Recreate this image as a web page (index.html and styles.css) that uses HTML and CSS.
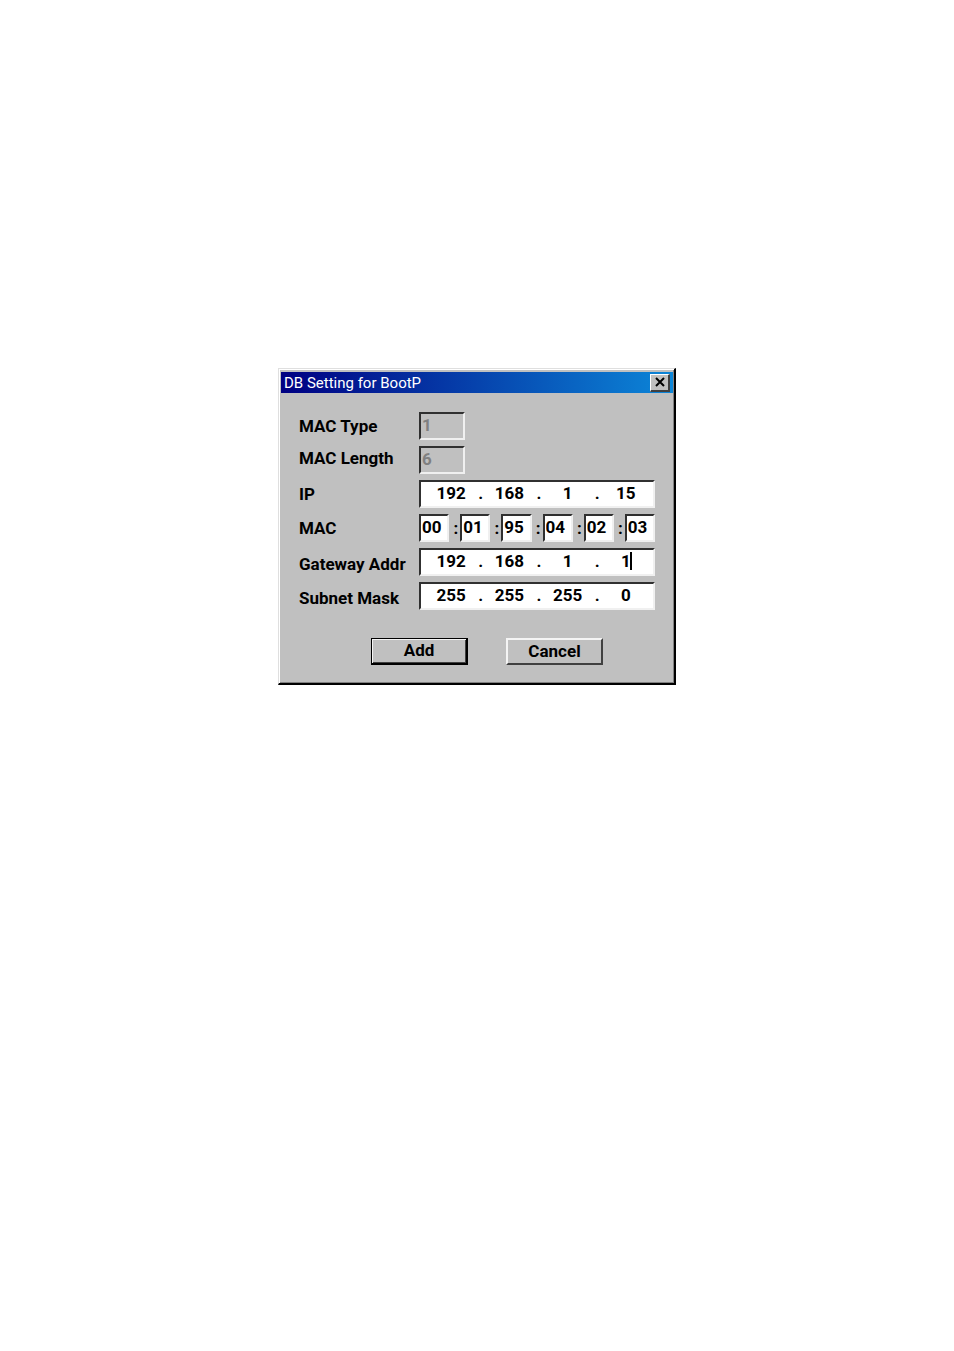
FILE: index.html
```html
<!DOCTYPE html>
<html lang="en">
<head>
    <meta charset="UTF-8">
    <meta name="viewport" content="width=device-width, initial-scale=1.0">
    <title>DB Setting for BootP</title>
    <link rel="stylesheet" href="styles.css">
</head>
<body>
    <form class="dialog">
        <div class="title-bar">
            <h1>DB Setting for BootP</h1>
            <button type="button" class="close-btn" aria-label="Close">
                <svg width="10" height="10" viewBox="0 0 10 10"><path d="M1 1L9 9M9 1L1 9" stroke="#000" stroke-width="2"/></svg>
            </button>
        </div>

        <div class="fields">
            <div class="row">
                <label for="mac-type">MAC Type</label>
                <input class="box short" type="text" id="mac-type" value="1" disabled>
            </div>
            <div class="row high">
                <label for="mac-length">MAC Length</label>
                <input class="box short" type="text" id="mac-length" value="6" disabled>
            </div>
            <div class="row">
                <label for="ip-1">IP</label>
                <div class="box address">
                    <input type="text" id="ip-1" value="192"><span>.</span>
                    <input type="text" aria-label="IP 2" value="168"><span>.</span>
                    <input type="text" aria-label="IP 3" value="1"><span>.</span>
                    <input type="text" aria-label="IP 4" value="15">
                </div>
            </div>
            <div class="row">
                <label for="mac-1">MAC</label>
                <div class="mac">
                    <input class="box" type="text" id="mac-1" value="00"><span>:</span>
                    <input class="box" type="text" aria-label="MAC 2" value="01"><span>:</span>
                    <input class="box" type="text" aria-label="MAC 3" value="95"><span>:</span>
                    <input class="box" type="text" aria-label="MAC 4" value="04"><span>:</span>
                    <input class="box" type="text" aria-label="MAC 5" value="02"><span>:</span>
                    <input class="box" type="text" aria-label="MAC 6" value="03">
                </div>
            </div>
            <div class="row low">
                <label for="gateway-1">Gateway Addr</label>
                <div class="box address active">
                    <input type="text" id="gateway-1" value="192"><span>.</span>
                    <input type="text" aria-label="Gateway 2" value="168"><span>.</span>
                    <input type="text" aria-label="Gateway 3" value="1"><span>.</span>
                    <input type="text" aria-label="Gateway 4" value="1">
                </div>
            </div>
            <div class="row low">
                <label for="subnet-1">Subnet Mask</label>
                <div class="box address">
                    <input type="text" id="subnet-1" value="255"><span>.</span>
                    <input type="text" aria-label="Subnet 2" value="255"><span>.</span>
                    <input type="text" aria-label="Subnet 3" value="255"><span>.</span>
                    <input type="text" aria-label="Subnet 4" value="0">
                </div>
            </div>
        </div>

        <div class="buttons">
            <button type="button" class="btn default">Add</button>
            <button type="button" class="btn">Cancel</button>
        </div>
    </form>
</body>
</html>
```

FILE: styles.css
```css
* {
    box-sizing: border-box;
}

body {
    margin: 0;
    padding: 368px 16px 40px;
    background-color: white;
    font-family: Roboto, "Liberation Sans", sans-serif;
    font-size: 17px;
    color: #000;
}

input, button {
    font: inherit;
    color: inherit;
}

.dialog {
    max-width: 398px;
    margin: 0 auto;
    padding: 3px 1px 18px 2px;
    background-color: #c0c0c0;
    border: 1px solid #dfdfdf;
    border-right: 2px solid #000;
    border-bottom: 2px solid #000;
    box-shadow: inset 1px 1px #fff, inset -1px -1px #808080;
}

/* Title bar */
.title-bar {
    display: flex;
    align-items: center;
    justify-content: space-between;
    height: 21px;
    padding: 0 3px;
    background: linear-gradient(to right, #000082, #0c86d8);
}

.title-bar h1 {
    margin: 0;
    font-size: 15px;
    font-weight: normal;
    color: white;
}

.close-btn {
    display: flex;
    align-items: center;
    justify-content: center;
    width: 20px;
    height: 18px;
    padding: 0;
    background-color: #c0c0c0;
    border: 1px solid #fff;
    border-right: 2px solid #404040;
    border-bottom: 2px solid #404040;
}

/* Fields */
.fields {
    display: flex;
    flex-direction: column;
    gap: 6px;
    padding: 19px 18px 0;
    font-weight: bold;
}

.row {
    display: flex;
    align-items: center;
    height: 28px;
}

.row label {
    flex: 0 0 120px;
}

.high label {
    padding-bottom: 4px;
}

.low label {
    padding-top: 4px;
}

.box {
    height: 28px;
    padding: 0 0 3px 1px;
    background-color: white;
    border: 2px solid #303030;
    border-right-color: #f0f0f0;
    border-bottom-color: #f0f0f0;
    border-radius: 0;
}

.short {
    width: 46px;
    background-color: #c0c0c0;
    color: #808080;
}

.address {
    position: relative;
    display: flex;
    flex: 1;
    align-items: center;
    padding-left: 3px;
}

.address input {
    flex: 1;
    width: 0;
    padding: 0;
    border: 0;
    background: none;
    text-align: center;
}

.address span {
    width: 4px;
}

/* Text cursor in the last part of the address */
.active::after {
    content: "";
    position: absolute;
    top: 2px;
    right: 21px;
    width: 2px;
    height: 18px;
    background-color: #000;
}

.mac {
    display: flex;
    flex: 1;
    align-items: center;
}

.mac .box {
    flex: 1;
    width: 0;
}

.mac span {
    width: 11px;
    text-align: right;
    padding-right: 2px;
}

/* Buttons */
.buttons {
    display: flex;
    gap: 38px;
    padding: 28px 0 0 90px;
}

.btn {
    width: 97px;
    height: 27px;
    padding: 0 0 2px;
    font-weight: bold;
    background-color: #c0c0c0;
    border: 2px solid #f4f4f4;
    border-right-color: #404040;
    border-bottom-color: #404040;
}

.default {
    border-color: #000;
    border-width: 1px 2px 2px 1px;
    box-shadow: inset 1px 1px #f4f4f4, inset -1px -1px #404040;
}
```
